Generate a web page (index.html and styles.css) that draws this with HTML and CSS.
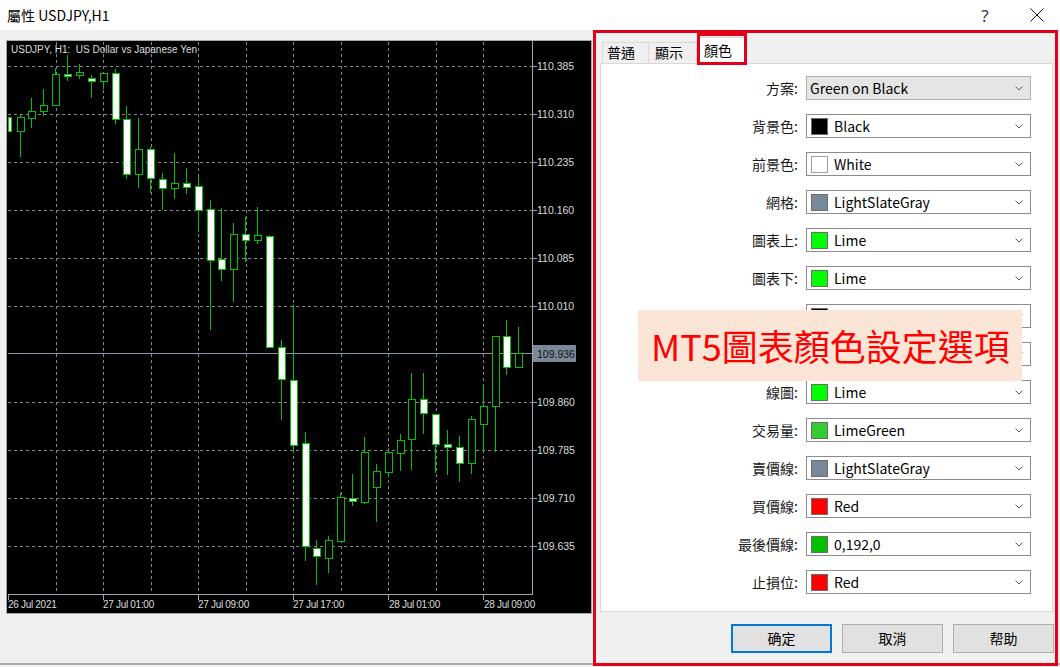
FILE: index.html
```html
<!DOCTYPE html>
<html>
<head>
<meta charset="utf-8">
<title>屬性 USDJPY,H1</title>
<link rel="stylesheet" href="styles.css">
</head>
<body>
<div class="window">
  <div class="titlebar">
    <span class="title">屬性 USDJPY,H1</span>
    <span class="tb-btn tb-help">?</span>
    <span class="tb-btn tb-close"><svg width="14" height="14" viewBox="0 0 14 14"><path d="M0.5 0.5 L13.5 13.5 M13.5 0.5 L0.5 13.5" stroke="#111" stroke-width="1" fill="none"/></svg></span>
  </div>
  <div class="content">
    <div class="chart">
      <svg width="586" height="574" viewBox="6 40 586 574">
        <rect x="6.5" y="40.5" width="585" height="573" fill="#000" stroke="#a8a8a8"/>
        <g class="grid">
          <line x1="8" x2="532" y1="66.5" y2="66.5"/>
          <line x1="8" x2="532" y1="114.5" y2="114.5"/>
          <line x1="8" x2="532" y1="162.5" y2="162.5"/>
          <line x1="8" x2="532" y1="210.5" y2="210.5"/>
          <line x1="8" x2="532" y1="258.5" y2="258.5"/>
          <line x1="8" x2="532" y1="306.5" y2="306.5"/>
          <line x1="8" x2="532" y1="402.5" y2="402.5"/>
          <line x1="8" x2="532" y1="450.5" y2="450.5"/>
          <line x1="8" x2="532" y1="498.5" y2="498.5"/>
          <line x1="8" x2="532" y1="546.5" y2="546.5"/>
          <line y1="42" y2="594" x1="56.5" x2="56.5"/>
          <line y1="42" y2="594" x1="103.5" x2="103.5"/>
          <line y1="42" y2="594" x1="151.5" x2="151.5"/>
          <line y1="42" y2="594" x1="198.5" x2="198.5"/>
          <line y1="42" y2="594" x1="246.5" x2="246.5"/>
          <line y1="42" y2="594" x1="293.5" x2="293.5"/>
          <line y1="42" y2="594" x1="341.5" x2="341.5"/>
          <line y1="42" y2="594" x1="388.5" x2="388.5"/>
          <line y1="42" y2="594" x1="436.5" x2="436.5"/>
          <line y1="42" y2="594" x1="483.5" x2="483.5"/>
        </g>
        <line class="pline" x1="8" x2="532" y1="353.5" y2="353.5"/>
        <g class="axis">
          <line x1="532.5" x2="532.5" y1="41" y2="595"/>
          <line x1="8" x2="533" y1="594.5" y2="594.5"/>
          <line x1="533" x2="537" y1="66.5" y2="66.5"/>
          <line x1="533" x2="537" y1="114.5" y2="114.5"/>
          <line x1="533" x2="537" y1="162.5" y2="162.5"/>
          <line x1="533" x2="537" y1="210.5" y2="210.5"/>
          <line x1="533" x2="537" y1="258.5" y2="258.5"/>
          <line x1="533" x2="537" y1="306.5" y2="306.5"/>
          <line x1="533" x2="537" y1="402.5" y2="402.5"/>
          <line x1="533" x2="537" y1="450.5" y2="450.5"/>
          <line x1="533" x2="537" y1="498.5" y2="498.5"/>
          <line x1="533" x2="537" y1="546.5" y2="546.5"/>
          <line x1="8.5" x2="8.5" y1="594" y2="600"/>
          <line x1="103.5" x2="103.5" y1="594" y2="600"/>
          <line x1="198.5" x2="198.5" y1="594" y2="600"/>
          <line x1="293.5" x2="293.5" y1="594" y2="600"/>
          <line x1="388.5" x2="388.5" y1="594" y2="600"/>
          <line x1="483.5" x2="483.5" y1="594" y2="600"/>
        </g>
        <g class="candles">
          <rect class="w" x="8.5" y="117.5" width="3" height="14"/>
          <line x1="20.5" x2="20.5" y1="114" y2="157"/><rect class="h" x="17.5" y="117.5" width="7" height="14"/>
          <line x1="31.5" x2="31.5" y1="98" y2="128"/><rect class="h" x="28.5" y="111.5" width="7" height="7"/>
          <line x1="43.5" x2="43.5" y1="89" y2="116"/><rect class="h" x="40.5" y="105.5" width="7" height="6"/>
          <line x1="55.5" x2="55.5" y1="68" y2="105"/><rect class="h" x="52.5" y="74.5" width="7" height="31"/>
          <line x1="67.5" x2="67.5" y1="55" y2="81"/><rect class="w" x="64.5" y="74.5" width="7" height="2"/>
          <line x1="79.5" x2="79.5" y1="64" y2="79"/><rect class="h" x="76.5" y="72.5" width="7" height="3"/>
          <line x1="91.5" x2="91.5" y1="75" y2="98"/><rect class="w" x="88.5" y="78.5" width="7" height="3"/>
          <line x1="103.5" x2="103.5" y1="73" y2="89"/><rect class="h" x="100.5" y="73.5" width="7" height="8"/>
          <line x1="115.5" x2="115.5" y1="69" y2="124"/><rect class="w" x="112.5" y="73.5" width="7" height="46"/>
          <line x1="126.5" x2="126.5" y1="106" y2="179"/><rect class="w" x="123.5" y="119.5" width="7" height="55"/>
          <line x1="138.5" x2="138.5" y1="118" y2="188"/><rect class="h" x="135.5" y="149.5" width="7" height="25"/>
          <line x1="150.5" x2="150.5" y1="147" y2="193"/><rect class="w" x="147.5" y="149.5" width="7" height="29"/>
          <line x1="162.5" x2="162.5" y1="173" y2="210"/><rect class="w" x="159.5" y="179.5" width="7" height="9"/>
          <line x1="174.5" x2="174.5" y1="153" y2="199"/><rect class="h" x="171.5" y="183.5" width="7" height="5"/>
          <line x1="186.5" x2="186.5" y1="168" y2="194"/><rect class="w" x="183.5" y="183.5" width="7" height="4"/>
          <line x1="198.5" x2="198.5" y1="176" y2="232"/><rect class="w" x="195.5" y="186.5" width="7" height="24"/>
          <line x1="210.5" x2="210.5" y1="200" y2="330"/><rect class="w" x="207.5" y="209.5" width="7" height="51"/>
          <line x1="221.5" x2="221.5" y1="208" y2="281"/><rect class="w" x="218.5" y="259.5" width="7" height="10"/>
          <line x1="233.5" x2="233.5" y1="223" y2="302"/><rect class="h" x="230.5" y="234.5" width="7" height="35"/>
          <line x1="245.5" x2="245.5" y1="217" y2="262"/><rect class="w" x="242.5" y="234.5" width="7" height="6"/>
          <line x1="257.5" x2="257.5" y1="207" y2="244"/><rect class="h" x="254.5" y="235.5" width="7" height="5"/>
          <line x1="269.5" x2="269.5" y1="235" y2="347"/><rect class="w" x="266.5" y="236.5" width="7" height="111"/>
          <line x1="281.5" x2="281.5" y1="340" y2="420"/><rect class="w" x="278.5" y="347.5" width="7" height="32"/>
          <line x1="293.5" x2="293.5" y1="305" y2="453"/><rect class="w" x="290.5" y="380.5" width="7" height="65"/>
          <line x1="305.5" x2="305.5" y1="432" y2="561"/><rect class="w" x="302.5" y="443.5" width="7" height="103"/>
          <line x1="316.5" x2="316.5" y1="540" y2="585"/><rect class="w" x="313.5" y="548.5" width="7" height="8"/>
          <line x1="328.5" x2="328.5" y1="536" y2="573"/><rect class="h" x="325.5" y="540.5" width="7" height="18"/>
          <line x1="340.5" x2="340.5" y1="493" y2="541"/><rect class="h" x="337.5" y="497.5" width="7" height="44"/>
          <line x1="352.5" x2="352.5" y1="474" y2="506"/><rect class="w" x="349.5" y="498.5" width="7" height="3"/>
          <line x1="364.5" x2="364.5" y1="437" y2="504"/><rect class="h" x="361.5" y="452.5" width="7" height="50"/>
          <line x1="376.5" x2="376.5" y1="464" y2="522"/><rect class="h" x="373.5" y="471.5" width="7" height="16"/>
          <line x1="388.5" x2="388.5" y1="448" y2="477"/><rect class="h" x="385.5" y="452.5" width="7" height="20"/>
          <line x1="400.5" x2="400.5" y1="434" y2="471"/><rect class="h" x="397.5" y="440.5" width="7" height="13"/>
          <line x1="411.5" x2="411.5" y1="373" y2="470"/><rect class="h" x="408.5" y="399.5" width="7" height="40"/>
          <line x1="423.5" x2="423.5" y1="373" y2="434"/><rect class="w" x="420.5" y="399.5" width="7" height="14"/>
          <line x1="435.5" x2="435.5" y1="414" y2="473"/><rect class="w" x="432.5" y="414.5" width="7" height="30"/>
          <line x1="447.5" x2="447.5" y1="430" y2="475"/><rect class="w" x="444.5" y="444.5" width="7" height="3"/>
          <line x1="459.5" x2="459.5" y1="436" y2="482"/><rect class="w" x="456.5" y="447.5" width="7" height="16"/>
          <line x1="471.5" x2="471.5" y1="416" y2="474"/><rect class="h" x="468.5" y="419.5" width="7" height="44"/>
          <line x1="483.5" x2="483.5" y1="385" y2="451"/><rect class="h" x="480.5" y="406.5" width="7" height="18"/>
          <line x1="495.5" x2="495.5" y1="336" y2="452"/><rect class="h" x="492.5" y="336.5" width="7" height="70"/>
          <line x1="506.5" x2="506.5" y1="320" y2="375"/><rect class="w" x="503.5" y="336.5" width="7" height="31"/>
          <line x1="518.5" x2="518.5" y1="327" y2="367"/><rect class="h" x="515.5" y="353.5" width="7" height="14"/>
        </g>
        <text class="ctitle" x="11" y="53">USDJPY, H1:&#160; US Dollar vs Japanese Yen</text>
        <g class="plabel">
          <text x="537" y="70">110.385</text>
          <text x="537" y="118">110.310</text>
          <text x="537" y="166">110.235</text>
          <text x="537" y="214">110.160</text>
          <text x="537" y="262">110.085</text>
          <text x="537" y="310">110.010</text>
          <text x="537" y="406">109.860</text>
          <text x="537" y="454">109.785</text>
          <text x="537" y="502">109.710</text>
          <text x="537" y="550">109.635</text>
        </g>
        <rect x="533" y="345" width="43" height="17" fill="#7b8897"/>
        <text class="cur" x="537" y="357.5">109.936</text>
        <g class="tlabel">
          <text x="8" y="608">26 Jul 2021</text>
          <text x="103" y="608">27 Jul 01:00</text>
          <text x="198" y="608">27 Jul 09:00</text>
          <text x="293" y="608">27 Jul 17:00</text>
          <text x="389" y="608">28 Jul 01:00</text>
          <text x="484" y="608">28 Jul 09:00</text>
        </g>
      </svg>
    </div>
    <div class="frame">
      <div class="tabs">
        <div class="tab t1">普通</div>
        <div class="tab t2">顯示</div>
        <div class="tab t3 active">顏色</div>
      </div>
      <div class="tab-mark"></div>
      <div class="panel">
        <div class="form">
          <div class="lbl">方案:</div>
          <div class="sel scheme"><span class="val">Green on Black</span><svg class="chev" width="8" height="5" viewBox="0 0 8 5"><path d="M0.5 0.5 L4 4 L7.5 0.5" fill="none" stroke="#5a5a5a"/></svg></div>

          <div class="lbl">背景色:</div>
          <div class="sel"><span class="sw c-black"></span><span class="val">Black</span><svg class="chev" width="8" height="5" viewBox="0 0 8 5"><path d="M0.5 0.5 L4 4 L7.5 0.5" fill="none" stroke="#5a5a5a"/></svg></div>

          <div class="lbl">前景色:</div>
          <div class="sel"><span class="sw c-white"></span><span class="val">White</span><svg class="chev" width="8" height="5" viewBox="0 0 8 5"><path d="M0.5 0.5 L4 4 L7.5 0.5" fill="none" stroke="#5a5a5a"/></svg></div>

          <div class="lbl">網格:</div>
          <div class="sel"><span class="sw c-slate"></span><span class="val">LightSlateGray</span><svg class="chev" width="8" height="5" viewBox="0 0 8 5"><path d="M0.5 0.5 L4 4 L7.5 0.5" fill="none" stroke="#5a5a5a"/></svg></div>

          <div class="lbl">圖表上:</div>
          <div class="sel"><span class="sw c-lime"></span><span class="val">Lime</span><svg class="chev" width="8" height="5" viewBox="0 0 8 5"><path d="M0.5 0.5 L4 4 L7.5 0.5" fill="none" stroke="#5a5a5a"/></svg></div>

          <div class="lbl">圖表下:</div>
          <div class="sel"><span class="sw c-lime"></span><span class="val">Lime</span><svg class="chev" width="8" height="5" viewBox="0 0 8 5"><path d="M0.5 0.5 L4 4 L7.5 0.5" fill="none" stroke="#5a5a5a"/></svg></div>

          <div class="lbl"></div>
          <div class="sel"><span class="sw c-black"></span><svg class="chev" width="8" height="5" viewBox="0 0 8 5"><path d="M0.5 0.5 L4 4 L7.5 0.5" fill="none" stroke="#5a5a5a"/></svg></div>

          <div class="lbl"></div>
          <div class="sel"><span class="sw c-white"></span><svg class="chev" width="8" height="5" viewBox="0 0 8 5"><path d="M0.5 0.5 L4 4 L7.5 0.5" fill="none" stroke="#5a5a5a"/></svg></div>

          <div class="lbl">線圖:</div>
          <div class="sel"><span class="sw c-lime"></span><span class="val">Lime</span><svg class="chev" width="8" height="5" viewBox="0 0 8 5"><path d="M0.5 0.5 L4 4 L7.5 0.5" fill="none" stroke="#5a5a5a"/></svg></div>

          <div class="lbl">交易量:</div>
          <div class="sel"><span class="sw c-limegreen"></span><span class="val">LimeGreen</span><svg class="chev" width="8" height="5" viewBox="0 0 8 5"><path d="M0.5 0.5 L4 4 L7.5 0.5" fill="none" stroke="#5a5a5a"/></svg></div>

          <div class="lbl">賣價線:</div>
          <div class="sel"><span class="sw c-slate"></span><span class="val">LightSlateGray</span><svg class="chev" width="8" height="5" viewBox="0 0 8 5"><path d="M0.5 0.5 L4 4 L7.5 0.5" fill="none" stroke="#5a5a5a"/></svg></div>

          <div class="lbl">買價線:</div>
          <div class="sel"><span class="sw c-red"></span><span class="val">Red</span><svg class="chev" width="8" height="5" viewBox="0 0 8 5"><path d="M0.5 0.5 L4 4 L7.5 0.5" fill="none" stroke="#5a5a5a"/></svg></div>

          <div class="lbl">最後價線:</div>
          <div class="sel"><span class="sw c-green"></span><span class="val">0,192,0</span><svg class="chev" width="8" height="5" viewBox="0 0 8 5"><path d="M0.5 0.5 L4 4 L7.5 0.5" fill="none" stroke="#5a5a5a"/></svg></div>

          <div class="lbl">止損位:</div>
          <div class="sel"><span class="sw c-red"></span><span class="val">Red</span><svg class="chev" width="8" height="5" viewBox="0 0 8 5"><path d="M0.5 0.5 L4 4 L7.5 0.5" fill="none" stroke="#5a5a5a"/></svg></div>
        </div>
      </div>
      <div class="buttons">
        <div class="btn default">确定</div>
        <div class="btn">取消</div>
        <div class="btn">帮助</div>
      </div>
      <div class="overlay">MT5圖表顏色設定選項</div>
    </div>
  </div>
</div>
</body>
</html>
```

FILE: styles.css
```css
html, body {
  margin: 0;
  padding: 0;
}
body {
  background: #f0f0f0;
  font-family: "Noto Sans CJK TC", "Noto Sans", sans-serif;
  color: #000;
  width: 1060px;
  height: 667px;
  overflow: hidden;
}
.window {
  height: 665px;
  box-sizing: border-box;
  border-bottom: 2px solid #a9a9a9;
}
.titlebar {
  height: 30px;
  background: #fff;
  display: flex;
  align-items: center;
  padding-left: 7px;
}
.title {
  flex: 1;
  font-size: 14px;
  line-height: 30px;
}
.tb-btn {
  width: 46px;
  height: 30px;
  display: flex;
  align-items: center;
  justify-content: center;
}
.tb-help {
  font-family: "Noto Sans", sans-serif;
  font-size: 17px;
  color: #3a3a3a;
  margin-right: 6px;
}
.tb-close svg {
  display: block;
}
.content {
  display: flex;
  align-items: flex-start;
}
.chart {
  margin: 10px 0 0 6px;
  width: 586px;
  height: 574px;
}
.chart svg {
  display: block;
}
.grid line {
  stroke: #80868e;
  stroke-width: 1;
  stroke-dasharray: 3 3;
}
.pline {
  stroke: #8a96a3;
  stroke-width: 1;
}
.axis line {
  stroke: #a8a8a8;
  stroke-width: 1;
}
.candles line {
  stroke: #00c000;
  stroke-width: 1;
}
.candles rect {
  stroke: #00c000;
  stroke-width: 1;
}
.candles rect.w {
  fill: #fff;
}
.candles rect.h {
  fill: #000;
}
.ctitle {
  font-family: "Liberation Sans", sans-serif;
  font-size: 10px;
  fill: #dcdcdc;
}
.plabel text {
  font-family: "Liberation Sans", sans-serif;
  font-size: 10.5px;
  fill: #dcdcdc;
}
.cur {
  font-family: "Liberation Sans", sans-serif;
  font-size: 10.5px;
  fill: #111;
}
.tlabel text {
  font-family: "Liberation Sans", sans-serif;
  font-size: 10px;
  letter-spacing: -0.3px;
  fill: #dcdcdc;
}
.frame {
  position: relative;
  margin-left: 1px;
  width: 465px;
  height: 636px;
  box-sizing: border-box;
  border: 3px solid #e3001b;
}
.tabs {
  display: flex;
  align-items: flex-end;
  height: 30px;
  padding-left: 6px;
}
.tab {
  box-sizing: border-box;
  height: 21px;
  border: 1px solid #d9d9d9;
  border-bottom: none;
  background: #f0f0f0;
  font-size: 14px;
  line-height: 19px;
  color: #000;
}
.t1 { width: 47px; padding-left: 4px; }
.t2 { width: 48px; padding-left: 6px; border-left: none; }
.t3 { width: 50px; padding-left: 6px; }
.tab.active {
  background: #fff;
  height: 27px;
  margin-bottom: -1px;
  line-height: 25px;
  position: relative;
}
.tab-mark {
  position: absolute;
  left: 101px;
  top: 0;
  width: 50px;
  height: 32px;
  box-sizing: border-box;
  border: 3px solid #e3001b;
}
.panel {
  margin-left: 4px;
  width: 453px;
  height: 549px;
  box-sizing: border-box;
  background: #fff;
  border: 1px solid #d9d9d9;
}
.form {
  display: grid;
  grid-template-columns: 197px 225px;
  column-gap: 8px;
  row-gap: 14px;
  padding-top: 12px;
}
.lbl {
  text-align: right;
  font-size: 14px;
  line-height: 24px;
  height: 24px;
  color: #1a1a1a;
}
.sel {
  box-sizing: border-box;
  height: 24px;
  border: 1px solid #8c8c8c;
  background: #fff;
  display: flex;
  align-items: center;
  padding-left: 4px;
}
.sel.scheme {
  background: #e5e5e5;
  border-color: #b0b0b0;
  padding-left: 3px;
}
.sw {
  width: 17px;
  height: 17px;
  box-sizing: border-box;
  border: 1px solid #6d6d6d;
  flex: none;
  margin-right: 6px;
}
.val {
  font-size: 14px;
  line-height: 22px;
  white-space: nowrap;
}
.chev {
  margin-left: auto;
  margin-right: 7px;
  display: block;
}
.c-black { background: #000; }
.c-white { background: #fff; border-color: #a0a0a0; }
.c-slate { background: #778899; }
.c-lime { background: #00ff00; }
.c-limegreen { background: #32cd32; }
.c-red { background: #ff0000; }
.c-green { background: #00c000; }
.buttons {
  display: flex;
  justify-content: flex-end;
  gap: 10px;
  margin-top: 12px;
  padding-right: 1px;
}
.btn {
  box-sizing: border-box;
  width: 101px;
  height: 29px;
  background: #e1e1e1;
  border: 1px solid #adadad;
  font-size: 14px;
  line-height: 27px;
  text-align: center;
}
.btn.default {
  border: 2px solid #0078d7;
  line-height: 25px;
}
.overlay {
  position: absolute;
  left: 42px;
  top: 277px;
  width: 384px;
  height: 71px;
  box-sizing: border-box;
  background: #fbe5d6;
  color: #ff0000;
  font-size: 36px;
  line-height: 71px;
  padding-left: 13px;
  white-space: nowrap;
  font-family: "Noto Sans CJK TC", sans-serif;
}
```
